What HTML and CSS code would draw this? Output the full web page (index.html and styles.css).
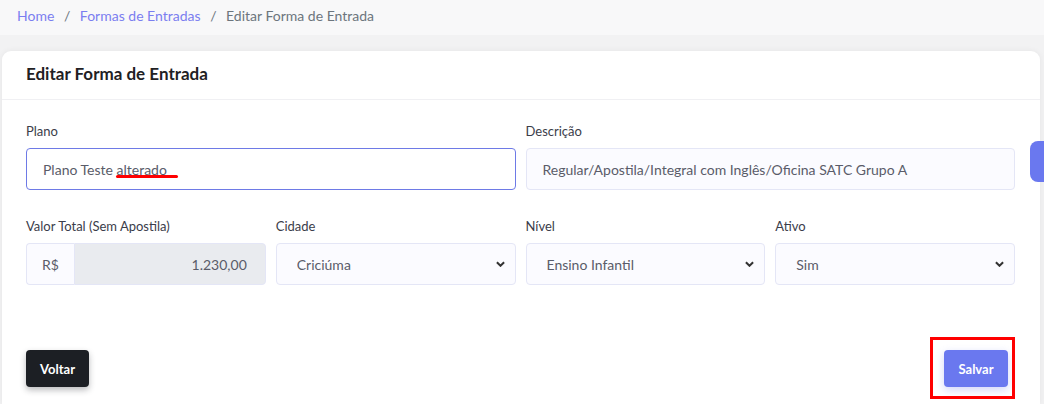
FILE: index.html
```html
<!DOCTYPE html>
<html lang="pt-BR">
<head>
    <meta charset="UTF-8">
    <meta name="viewport" content="width=device-width, initial-scale=1.0">
    <title>Editar Forma de Entrada</title>
    <link rel="stylesheet" href="styles.css">
</head>
<body>
    <nav class="breadcrumb">
        <a href="#">Home</a>
        <span class="sep">/</span>
        <a href="#">Formas de Entradas</a>
        <span class="sep">/</span>
        <span class="current">Editar Forma de Entrada</span>
    </nav>

    <div class="card">
        <div class="card-header">Editar Forma de Entrada</div>
        <form class="card-body">
            <div class="grid">
                <div class="field span-2">
                    <label>Plano</label>
                    <div class="marked">
                        <input type="text" class="control focused" value="Plano Teste alterado">
                        <span class="underline"></span>
                    </div>
                </div>
                <div class="field span-2">
                    <label>Descrição</label>
                    <input type="text" class="control" value="Regular/Apostila/Integral com Inglês/Oficina SATC Grupo A">
                </div>

                <div class="field">
                    <label>Valor Total (Sem Apostila)</label>
                    <div class="input-group">
                        <span class="addon">R$</span>
                        <input type="text" class="control money" value="1.230,00" disabled>
                    </div>
                </div>
                <div class="field">
                    <label>Cidade</label>
                    <div class="select-wrap">
                        <select class="control"><option>Criciúma</option></select>
                        <svg class="chevron" viewBox="0 0 10 6"><path d="M1 1l4 4 4-4"/></svg>
                    </div>
                </div>
                <div class="field">
                    <label>Nível</label>
                    <div class="select-wrap">
                        <select class="control"><option>Ensino Infantil</option></select>
                        <svg class="chevron" viewBox="0 0 10 6"><path d="M1 1l4 4 4-4"/></svg>
                    </div>
                </div>
                <div class="field">
                    <label>Ativo</label>
                    <div class="select-wrap">
                        <select class="control"><option>Sim</option></select>
                        <svg class="chevron" viewBox="0 0 10 6"><path d="M1 1l4 4 4-4"/></svg>
                    </div>
                </div>
            </div>

            <div class="actions">
                <button type="button" class="btn btn-dark">Voltar</button>
                <span class="highlight">
                    <button type="button" class="btn btn-primary">Salvar</button>
                </span>
            </div>
        </form>
    </div>

    <div class="side-tab"></div>
</body>
</html>
```

FILE: styles.css
```css
* {
    box-sizing: border-box;
}
body {
    margin: 0;
    font-family: Lato, "Open Sans", sans-serif;
    background-color: #f2f2f3;
    color: #5a5c69;
    height: 404px;
    overflow: hidden;
}
.breadcrumb {
    height: 35px;
    padding: 6px 17px;
    background-color: #f8f8f9;
    font-size: 14px;
    line-height: 20px;
}
.breadcrumb a {
    color: #7b7ef0;
    text-decoration: none;
}
.breadcrumb .sep {
    color: #6c757d;
    margin: 0 6px;
}
.breadcrumb .current {
    color: #6c757d;
}
.card {
    margin: 16px 4px 0 2px;
    background-color: #fff;
    border-radius: 9px 9px 0 0;
    box-shadow: 0 0 6px rgba(0, 0, 0, 0.06);
    height: 353px;
}
.card-header {
    height: 49px;
    padding: 0 24px 4px;
    display: flex;
    align-items: center;
    font-size: 17px;
    font-weight: 700;
    color: #1f2124;
    border-bottom: 1px solid #f0f0f3;
}
.card-body {
    padding: 23px 25px 0 24px;
}
.grid {
    display: grid;
    grid-template-columns: repeat(4, 1fr);
    column-gap: 10px;
    row-gap: 28px;
}
.span-2 {
    grid-column: span 2;
}
.field label {
    display: block;
    font-size: 13px;
    line-height: 16px;
    color: #3b3d4a;
    margin-bottom: 9px;
}
.control {
    width: 100%;
    height: 42px;
    padding: 0 16px;
    font-family: inherit;
    font-size: 14px;
    color: #5a5c69;
    background-color: #fbfbff;
    border: 1px solid #e4e6f6;
    border-radius: 4px;
    outline: none;
}
.control.focused {
    background-color: #fff;
    border-color: #6e7ae6;
}
.marked {
    position: relative;
}
.underline {
    position: absolute;
    left: 90px;
    top: 27px;
    width: 62px;
    height: 3px;
    background-color: #ff0000;
    border-radius: 2px;
}
.input-group {
    display: flex;
}
.addon {
    width: 48px;
    height: 42px;
    display: flex;
    align-items: center;
    justify-content: center;
    font-size: 14px;
    background-color: #fbfbff;
    border: 1px solid #e4e6f6;
    border-right: none;
    border-radius: 4px 0 0 4px;
}
.control.money {
    flex: 1;
    text-align: right;
    padding-right: 18px;
    background-color: #e9ebef;
    border-radius: 0 4px 4px 0;
}
.select-wrap {
    position: relative;
}
.select-wrap select {
    appearance: none;
    padding-left: 20px;
}
.chevron {
    position: absolute;
    right: 11px;
    top: 18px;
    width: 9px;
    height: 6px;
    fill: none;
    stroke: #333;
    stroke-width: 2.2;
    pointer-events: none;
}
.actions {
    display: flex;
    justify-content: space-between;
    margin-top: 65px;
    padding-right: 7px;
}
.btn {
    height: 37px;
    padding: 0 14px;
    font-family: inherit;
    font-size: 13px;
    font-weight: 700;
    color: #fff;
    border: none;
    border-radius: 4px;
    cursor: pointer;
}
.btn-dark {
    background-color: #1c1f24;
    box-shadow: 0 3px 6px rgba(28, 31, 36, 0.3);
}
.btn-primary {
    width: 64px;
    padding: 0;
    background-color: #6a78ef;
    box-shadow: 0 3px 8px rgba(106, 120, 239, 0.3);
}
.highlight {
    position: relative;
    display: inline-block;
}
.highlight::after {
    content: "";
    position: absolute;
    top: -13px;
    bottom: -12px;
    left: -14px;
    right: -7px;
    border: 3px solid #ff0000;
}
.side-tab {
    position: absolute;
    left: 1030px;
    top: 141px;
    width: 20px;
    height: 41px;
    background-color: #6a78ef;
    border-radius: 8px 0 0 8px;
}
```
